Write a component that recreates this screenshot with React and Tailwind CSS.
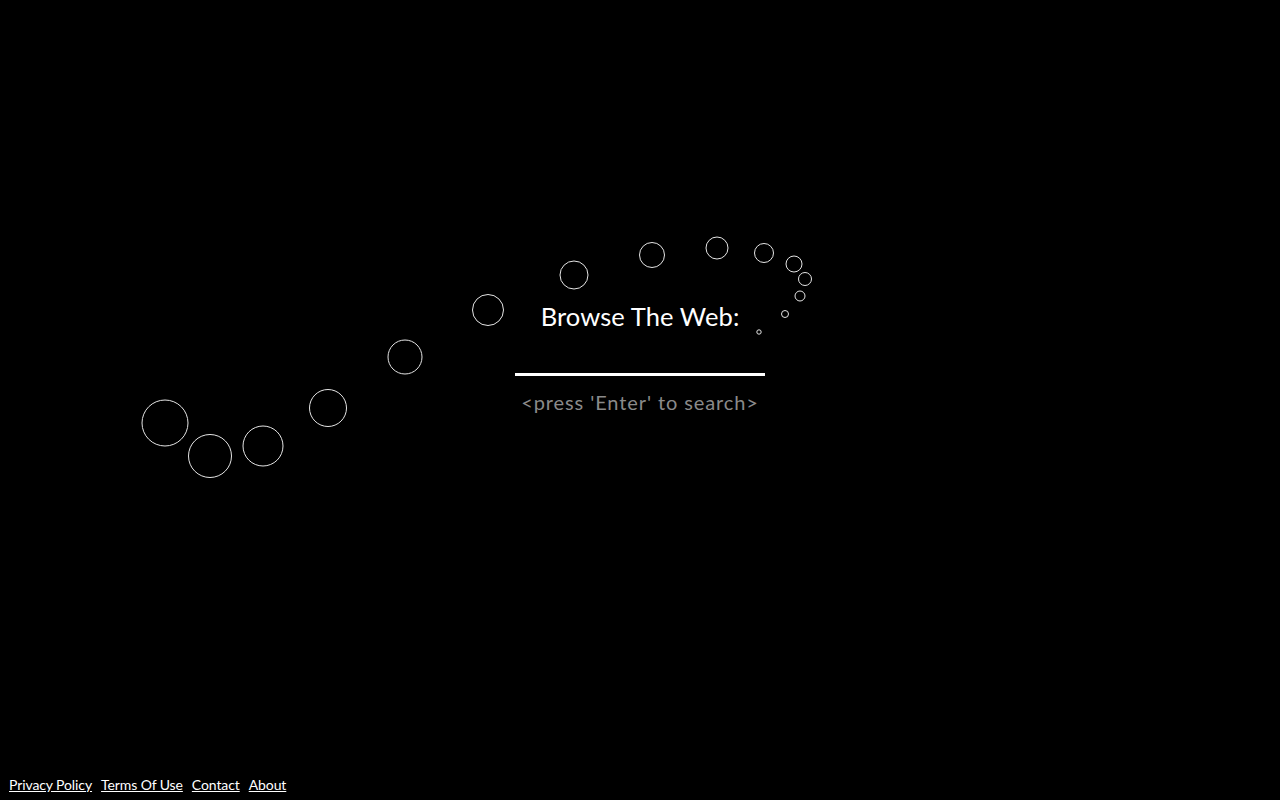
const bubbles = [
  [165, 423, 23],
  [210, 456, 21.5],
  [263, 446, 20],
  [328, 408, 18.5],
  [405, 357, 17],
  [488, 310, 15.5],
  [574, 275, 14],
  [652, 255, 12.5],
  [717, 248, 11],
  [764, 253, 9.5],
  [794, 264, 8],
  [805, 279, 6.5],
  [800, 296, 5],
  [785, 314, 3.5],
  [759, 332, 2.2],
];

const links = ["Privacy Policy", "Terms Of Use", "Contact", "About"];

export default function App() {
  return (
    <div className="relative h-screen w-screen bg-black text-white overflow-hidden flex flex-col">
      <svg className="absolute inset-0 pointer-events-none" width="1280" height="800">
        {bubbles.map(([cx, cy, r], i) => (
          <circle key={i} cx={cx} cy={cy} r={r} fill="none" stroke="#e5e5e5" strokeWidth="1" />
        ))}
      </svg>

      <main className="flex-1 flex flex-col items-center pt-[298px] font-['Lato','Open_Sans',sans-serif]">
        <h1 className="text-[25.5px] leading-[36px] font-normal tracking-[0.1px]">Browse The Web:</h1>
        <input
          type="text"
          className="mt-[22px] w-[250px] h-[20px] bg-transparent border-0 border-b-[3px] border-white outline-none text-white text-center"
        />
        <p className="mt-[12px] text-[20px] leading-[28px] tracking-[0.9px] text-[#8a8a8a]">&lt;press &apos;Enter&apos; to search&gt;</p>
      </main>

      <footer className="flex gap-[9px] px-[9px] pb-[5px] text-[14px] tracking-[-0.1px] font-['Lato',sans-serif]">
        {links.map((l) => (
          <a key={l} href="#" className="underline text-white">
            {l}
          </a>
        ))}
      </footer>
    </div>
  );
}
